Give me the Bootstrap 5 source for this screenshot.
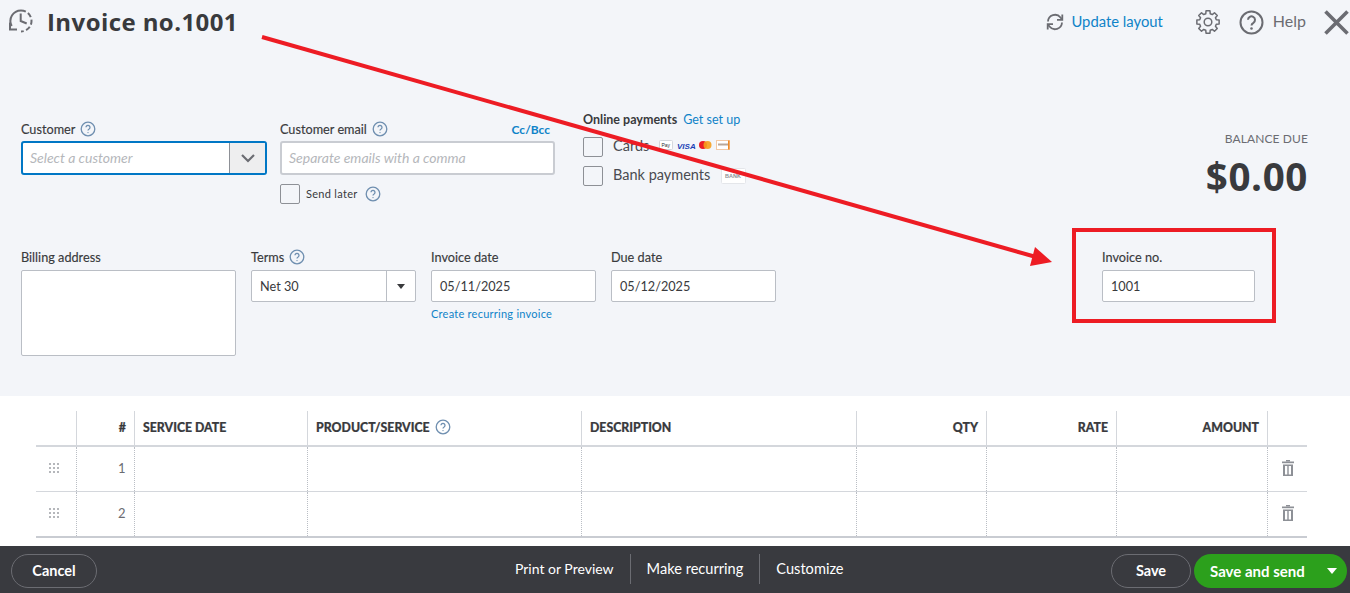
<!DOCTYPE html>
<html lang="en">
<head>
<meta charset="utf-8">
<title>Invoice no.1001</title>
<link href="https://cdn.jsdelivr.net/npm/bootstrap@5.3.0/dist/css/bootstrap.min.css" rel="stylesheet">
<style>
html,body{height:593px;overflow:hidden}
body{font-family:"Lato","Liberation Sans",sans-serif;color:#393a3d;background:#fff;position:relative;font-size:13px}
.sheet{height:396px;background:#f3f5f9}
.topbar{height:44px;padding:8px 0 0 8px}
.ttl{font-family:"Open Sans","Liberation Sans",sans-serif;font-weight:700;font-size:24px;line-height:28px;margin:0 0 0 13px;letter-spacing:.42px;color:#393a3d}
.updlink{color:#0f83c8;font-size:14.8px;text-decoration:none;margin-left:7px;padding-bottom:2px}
.helpword{color:#6b6c72;font-size:16px;margin-left:9px;padding-bottom:2px}
.rowa{height:132px;margin-top:67px;padding:0 42px 0 21px}
.rowb{padding:0 95px 0 21px;margin-top:6px}
.lbl{display:block;font-size:12.7px;line-height:16px;height:16px;margin-bottom:5px;color:#393a3d;white-space:nowrap;-webkit-text-stroke:.15px #393a3d}
.qm{vertical-align:-3px;margin-left:5px}
.c1{width:246px;margin-top:10px}
.c2{width:275px;margin:10px 0 0 13px}
.c1 .lbl,.c2 .lbl{margin-bottom:4px}
.c3{margin-left:28px}
.combo{height:34px;border:2px solid #0077c5;border-radius:3px;background:#fff;display:flex;overflow:hidden}
.combo .ph{flex:1;padding:0 7px}
.ph{font-style:italic;font-size:14px;color:#b5b7bb;line-height:30px}
.chev{width:36px;background:#eeeeef;border-left:1px solid #8d9096;display:flex;align-items:center;justify-content:center}
.mail{height:34px;border:2px solid #c9ccd2;border-radius:3px;background:#fff;padding:0 7px}
.cc{margin-left:auto;color:#0f83c8;font-size:12px;font-weight:700;margin-right:5px;text-decoration:none}
.box{width:20px;height:20px;border:1px solid #8d9096;border-radius:2px;background:#f3f5f9;flex:none;display:block}
.sendl{margin-top:9px;font-size:11px;letter-spacing:.3px;gap:6px}
.op-h{font-size:12.5px;line-height:16px;height:16px;margin:0 0 10px;font-weight:700;white-space:nowrap;padding-top:1px}
.op-h a{color:#0f83c8;font-weight:400;text-decoration:none;margin-left:3px}
.opline{height:20px;margin-bottom:9px;font-size:14.5px;gap:10px;white-space:nowrap;color:#4a4b50}
.opline .opt{padding-bottom:3px}
.paysvg{display:block}
.bal{margin-left:auto;text-align:right;padding-top:18px}
.bal-l{font-size:12px;line-height:20px;color:#6b6c72;letter-spacing:.1px}
.bal-v{font-family:"Open Sans","Liberation Sans",sans-serif;font-size:38.6px;line-height:44px;font-weight:700;margin-top:5px;letter-spacing:.6px}
.fld{height:32px;border:1px solid #babec5;border-radius:2px;background:#fff;padding:0 8px;font-size:12.7px;line-height:30px;color:#393a3d}
.w-bill{width:215px;height:86px}
.w-term{width:165px;margin-left:15px}
.w-date{width:165px;margin-left:15px}
.w-no{width:153px;margin-left:auto}
.fld.split{display:flex;padding:0}
.fld.split span{flex:1;padding:0 8px}
.fld.split i{width:29px;border-left:1px solid #babec5;display:flex;align-items:center;justify-content:center}
.tri{width:0;height:0;border:4px solid transparent;border-top:5px solid #393a3d;border-bottom:0}
.recur{font-size:11px;color:#0f83c8;text-decoration:none;display:block;margin-top:4px;letter-spacing:.25px}
.linewrap{padding:15px 43px 0 36px;height:150px}
.lines{table-layout:fixed;border-collapse:collapse;width:1271px;margin:0}
.lines th{height:35px;font-size:12.3px;font-weight:900;padding:0 7.5px 0 8.5px;border-bottom:2px solid #d4d7dc;border-left:1px solid #d4d7dc;color:#393a3d;white-space:nowrap;-webkit-text-stroke:.2px #393a3d}
.lines th:first-child,.lines td:first-child{border-left:0}
.lines td{height:45px;padding:0 8px;border-left:1px dotted #babec5;border-bottom:1px solid #d4d7dc;font-size:13px;color:#6b6c72}
.lines tr:last-child td{border-bottom:2px solid #c9ccd2;height:46px}
.lines .n{text-align:right}
.lines .grip{padding:0 12px 0 8px;text-align:center}
.lines .bin{padding:0 0 0 1px;text-align:center}
.lines td svg{vertical-align:middle;margin-top:-3px}
.bottom{height:47px;background:#393a3f;padding:8px 3px 5px 11px;color:#fff;position:relative}
.pill{height:34px;border-radius:17px;border:1px solid #6b6c72;background:transparent;color:#fff;font-size:14.5px;font-weight:700;padding:0;display:flex;align-items:center;justify-content:center}
.p-cancel{width:86px}
.p-save{width:80px;margin-left:auto}
.p-send{width:153px;margin-left:3px;background:#2ca01c;border:0;display:flex;font-size:15px}
.p-send span{flex:1;text-align:left;padding-left:16px}
.p-send .tri{border-top-color:#fff;border-width:5px;border-top-width:6px;border-bottom:0;margin-right:10px}
.mid{position:absolute;left:499px;top:8px;height:30px;display:flex;align-items:center;font-size:14px}
.mid a{color:#fff;text-decoration:none;padding:0 16px;line-height:30px;white-space:nowrap}
.mid a+a{border-left:1px solid #6b6c72;font-size:14.6px}
.overlay{position:absolute;left:0;top:0;pointer-events:none}
.redbox{position:absolute;left:1072px;top:228px;width:204px;height:95px;border:4px solid #ed1c24}
</style>
</head>
<body>
<div class="sheet">
  <div class="topbar d-flex align-items-start">
    <svg width="26" height="26" viewBox="0 0 26 26" fill="none" stroke="#6b6c72" stroke-width="2"><path d="M3.700 18A10.500 10.500 0 0 1 13 2.500"/><path d="M13 2.500A10.500 10.500 0 0 1 13 23.500" stroke-dasharray="5 2.500"/><path d="M12.700 5.500V13l6 2.500"/><path d="M2 14.500v7h7"/></svg>
    <h1 class="ttl">Invoice no.1001</h1>
    <div class="ms-auto d-flex align-items-center" style="height:28px">
      <svg width="18" height="18" viewBox="0 0 18 18" fill="none" stroke="#6b6c72" stroke-width="1.800"><path d="M2 8.500A7 7 0 0 1 14.500 4.500L16 6.500M16 9.500A7 7 0 0 1 3.500 13.500L2 11.500"/><path d="M16.300 1.500v5.300h-5.300M1.700 16.500v-5.300h5.300"/></svg>
      <a class="updlink" href="#">Update layout</a>
      <svg style="margin-left:33px" width="24" height="24" viewBox="-12 -12 24 24" fill="none" stroke="#6b6c72" stroke-width="1.500" stroke-linejoin="round"><circle r="3.800"/><polygon points="-2.230,8.310 -1.960,11.130 1.960,11.130 2.230,8.310 4.300,7.450 6.480,9.260 9.260,6.480 7.450,4.300 8.310,2.230 11.130,1.960 11.130,-1.960 8.310,-2.230 7.450,-4.300 9.260,-6.480 6.480,-9.260 4.300,-7.450 2.230,-8.310 1.960,-11.130 -1.960,-11.130 -2.230,-8.310 -4.300,-7.450 -6.480,-9.260 -9.260,-6.480 -7.450,-4.300 -8.310,-2.230 -11.130,-1.960 -11.130,1.960 -8.310,2.230 -7.450,4.300 -9.260,6.480 -6.480,9.260 -4.300,7.450"/></svg>
      <svg style="margin-left:19px" width="25" height="25" viewBox="0 0 25 25" fill="none" stroke="#6b6c72" stroke-width="2"><circle cx="12.500" cy="12.500" r="11"/><path d="M9 9.800a3.500 3.500 0 1 1 5.400 3c-1.300.8-1.900 1.300-1.900 2.700" stroke-width="2"/><circle cx="12.500" cy="18.500" r="1.300" fill="#6b6c72" stroke="none"/></svg>
      <span class="helpword">Help</span>
      <svg style="margin-left:18px;margin-right:1px" width="25" height="25" viewBox="0 0 25 25" stroke="#6b6c72" stroke-width="3.600"><path d="M1.500 1.500l22 22M23.500 1.500l-22 22"/></svg>
    </div>
  </div>

  <div class="rowa d-flex align-items-start">
    <div class="c1">
      <label class="lbl">Customer<svg class="qm" width="16" height="16" viewBox="0 0 16 16" fill="none" stroke="#6f8fb0" stroke-width="1.300"><circle cx="8" cy="8" r="6.800"/><path d="M6 6.300a2 2 0 1 1 3.100 1.700c-.8.500-1.100.8-1.100 1.600"/><circle cx="8" cy="11.600" r=".7" fill="#6f8fb0" stroke="none"/></svg></label>
      <div class="combo"><div class="ph">Select a customer</div><div class="chev"><svg width="14" height="9" viewBox="0 0 14 9" fill="none" stroke="#6b6c72" stroke-width="2.200"><path d="M1 1l6 6 6-6"/></svg></div></div>
    </div>
    <div class="c2">
      <div class="d-flex"><label class="lbl">Customer email<svg class="qm" width="16" height="16" viewBox="0 0 16 16" fill="none" stroke="#6f8fb0" stroke-width="1.300"><circle cx="8" cy="8" r="6.800"/><path d="M6 6.300a2 2 0 1 1 3.100 1.700c-.8.500-1.100.8-1.100 1.600"/><circle cx="8" cy="11.600" r=".7" fill="#6f8fb0" stroke="none"/></svg></label><a class="cc" href="#">Cc/Bcc</a></div>
      <div class="mail"><span class="ph">Separate emails with a comma</span></div>
      <div class="sendl d-flex align-items-center"><span class="box"></span><span>Send later</span><svg style="margin-left:1px" width="16" height="16" viewBox="0 0 16 16" fill="none" stroke="#6f8fb0" stroke-width="1.300"><circle cx="8" cy="8" r="6.800"/><path d="M6 6.300a2 2 0 1 1 3.100 1.700c-.8.500-1.100.8-1.100 1.600"/><circle cx="8" cy="11.600" r=".7" fill="#6f8fb0" stroke="none"/></svg></div>
    </div>
    <div class="c3">
      <p class="op-h">Online payments <a href="#">Get set up</a></p>
      <div class="opline d-flex align-items-center"><span class="box"></span><span class="opt">Cards</span>
        <svg class="paysvg" width="72" height="16" viewBox="0 1 72 16"><rect x=".5" y="2.500" width="13" height="9" rx="1" fill="#fff" stroke="#d4d7dc"/><text x="2.500" y="9" font-size="5" fill="#333" font-family="Liberation Sans">Pay</text><text x="18" y="10.500" font-size="8" font-weight="700" font-style="italic" fill="#1a3fb5" font-family="Liberation Sans">VISA</text><circle cx="44" cy="7" r="4" fill="#eb1c26"/><circle cx="48.500" cy="7" r="4" fill="#f79e1b" fill-opacity=".9"/><rect x="57.500" y="2.500" width="13" height="9" fill="#fff" stroke="#f3c9a5"/><rect x="59" y="5.500" width="10" height="2" fill="#b9a79a"/><rect x="69" y="2.500" width="1.500" height="9" fill="#f08a24"/></svg>
      </div>
      <div class="opline d-flex align-items-center"><span class="box"></span><span class="opt">Bank payments</span>
        <svg class="paysvg" style="margin-left:1px" width="25" height="16" viewBox="0 0 25 16"><rect x=".5" y=".5" width="24" height="15" rx="1" fill="#fff" stroke="#e4e6ea"/><text x="4" y="10" font-size="5.500" font-weight="700" fill="#8d9096" font-family="Liberation Sans">BANK</text></svg>
      </div>
    </div>
    <div class="bal">
      <div class="bal-l">BALANCE DUE</div>
      <div class="bal-v">$0.00</div>
    </div>
  </div>

  <div class="rowb d-flex align-items-start">
    <div><label class="lbl">Billing address</label><div class="fld w-bill"></div></div>
    <div><label class="lbl" style="margin-left:15px">Terms<svg class="qm" width="16" height="16" viewBox="0 0 16 16" fill="none" stroke="#6f8fb0" stroke-width="1.300"><circle cx="8" cy="8" r="6.800"/><path d="M6 6.300a2 2 0 1 1 3.100 1.700c-.8.500-1.100.8-1.100 1.600"/><circle cx="8" cy="11.600" r=".7" fill="#6f8fb0" stroke="none"/></svg></label><div class="fld w-term split"><span>Net 30</span><i><b class="tri"></b></i></div></div>
    <div><label class="lbl" style="margin-left:15px">Invoice date</label><div class="fld w-date">05/11/2025</div><a class="recur" style="margin-left:15px" href="#">Create recurring invoice</a></div>
    <div><label class="lbl" style="margin-left:15px">Due date</label><div class="fld w-date">05/12/2025</div></div>
    <div class="ms-auto"><label class="lbl">Invoice no.</label><div class="fld w-no">1001</div></div>
  </div>
</div>

<div class="linewrap">
  <table class="lines">
    <colgroup><col style="width:40px"><col style="width:58px"><col style="width:173px"><col style="width:274px"><col style="width:275px"><col style="width:130px"><col style="width:130px"><col style="width:151px"><col style="width:40px"></colgroup>
    <thead><tr><th></th><th class="n">#</th><th>SERVICE DATE</th><th>PRODUCT/SERVICE<svg class="qm" width="16" height="16" viewBox="0 0 16 16" fill="none" stroke="#6f8fb0" stroke-width="1.300"><circle cx="8" cy="8" r="6.800"/><path d="M6 6.300a2 2 0 1 1 3.100 1.700c-.8.500-1.100.8-1.100 1.600"/><circle cx="8" cy="11.600" r=".7" fill="#6f8fb0" stroke="none"/></svg></th><th>DESCRIPTION</th><th class="n">QTY</th><th class="n">RATE</th><th class="n">AMOUNT</th><th></th></tr></thead>
    <tbody>
      <tr><td class="grip"><svg width="12" height="10" viewBox="0 0 12 10" fill="#b5b7bb"><rect x="1" y="0" width="2" height="2"/><rect x="5" y="0" width="2" height="2"/><rect x="9" y="0" width="2" height="2"/><rect x="1" y="4" width="2" height="2"/><rect x="5" y="4" width="2" height="2"/><rect x="9" y="4" width="2" height="2"/><rect x="1" y="8" width="2" height="2"/><rect x="5" y="8" width="2" height="2"/><rect x="9" y="8" width="2" height="2"/></svg></td><td class="n">1</td><td></td><td></td><td></td><td></td><td></td><td></td><td class="bin"><svg width="12" height="16" viewBox="0 0 12 16" fill="#8d9096"><rect x="4" y="0" width="4" height="1.500"/><rect x="0" y="1.500" width="12" height="1.700"/><path d="M1 4.500h10V16H1zM3 6v8.400h2.300V6zm3.700 0v8.400H9V6z" fill-rule="evenodd"/></svg></td></tr>
      <tr><td class="grip"><svg width="12" height="10" viewBox="0 0 12 10" fill="#b5b7bb"><rect x="1" y="0" width="2" height="2"/><rect x="5" y="0" width="2" height="2"/><rect x="9" y="0" width="2" height="2"/><rect x="1" y="4" width="2" height="2"/><rect x="5" y="4" width="2" height="2"/><rect x="9" y="4" width="2" height="2"/><rect x="1" y="8" width="2" height="2"/><rect x="5" y="8" width="2" height="2"/><rect x="9" y="8" width="2" height="2"/></svg></td><td class="n">2</td><td></td><td></td><td></td><td></td><td></td><td></td><td class="bin"><svg width="12" height="16" viewBox="0 0 12 16" fill="#8d9096"><rect x="4" y="0" width="4" height="1.500"/><rect x="0" y="1.500" width="12" height="1.700"/><path d="M1 4.500h10V16H1zM3 6v8.400h2.300V6zm3.700 0v8.400H9V6z" fill-rule="evenodd"/></svg></td></tr>
    </tbody>
  </table>
</div>

<div class="bottom d-flex">
  <button class="pill p-cancel" type="button">Cancel</button>
  <div class="mid"><a href="#">Print or Preview</a><a href="#">Make recurring</a><a href="#">Customize</a></div>
  <button class="pill p-save" type="button">Save</button>
  <button class="pill p-send" type="button"><span>Save and send</span><b class="tri"></b></button>
</div>

<div class="redbox"></div>
<svg class="overlay" width="1350" height="593" viewBox="0 0 1350 593"><path d="M262 37L1036 257" stroke="#ed1c24" stroke-width="4" fill="none"/><path d="M1052 262L1035 247L1030 266z" fill="#ed1c24"/></svg>
<script src="https://cdn.jsdelivr.net/npm/bootstrap@5.3.0/dist/js/bootstrap.bundle.min.js"></script>
</body>
</html>
